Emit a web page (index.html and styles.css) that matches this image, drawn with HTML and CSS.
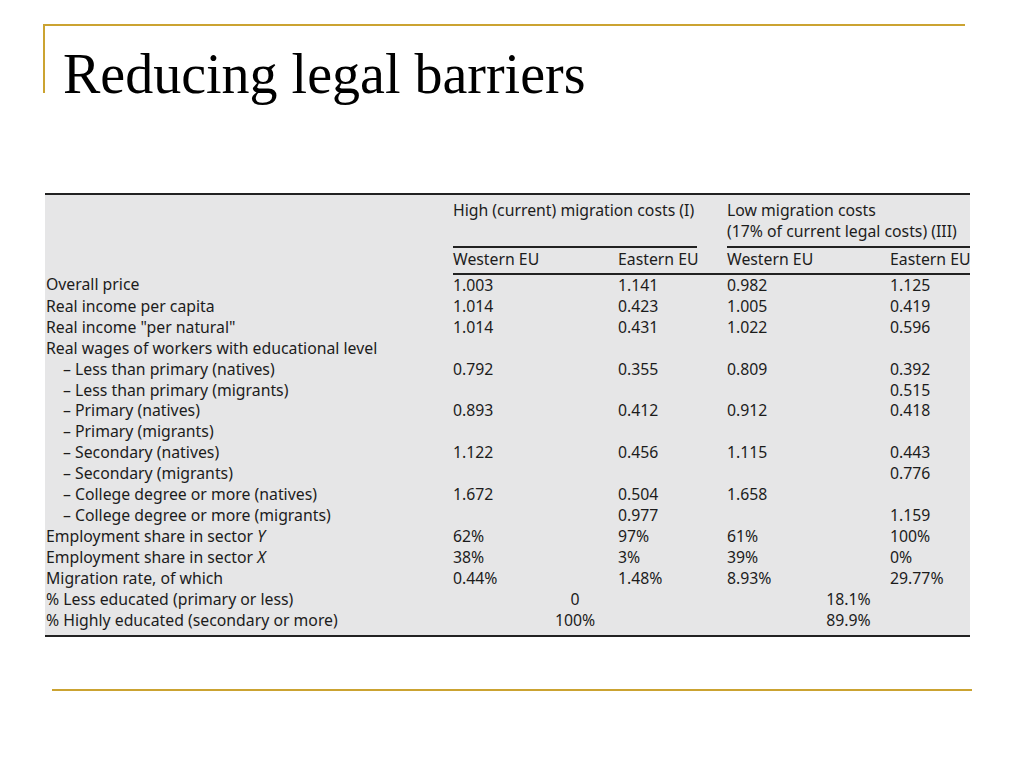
FILE: index.html
```html
<!DOCTYPE html>
<html lang="en">
<head>
<meta charset="utf-8">
<title>Reducing legal barriers</title>
<link rel="stylesheet" href="styles.css">
</head>
<body>
<div class="slide">
  <header class="title-bar">
    <h1>Reducing legal barriers</h1>
  </header>

  <div class="table-wrap">
    <table class="data">
      <colgroup>
        <col class="c-label"><col class="c-a"><col class="c-b"><col class="c-c"><col class="c-d">
      </colgroup>
      <thead>
        <tr class="group-row">
          <th rowspan="2" class="blank"></th>
          <th colspan="2" class="group g1"><div class="group-inner">High (current) migration costs (I)<br>&nbsp;</div></th>
          <th colspan="2" class="group g2"><div class="group-inner">Low migration costs<br>(17% of current legal costs) (III)</div></th>
        </tr>
        <tr class="sub-row">
          <th>Western EU</th>
          <th>Eastern EU</th>
          <th>Western EU</th>
          <th>Eastern EU</th>
        </tr>
      </thead>
      <tbody>
        <tr><td>Overall price</td><td>1.003</td><td>1.141</td><td>0.982</td><td>1.125</td></tr>
        <tr><td>Real income per capita</td><td>1.014</td><td>0.423</td><td>1.005</td><td>0.419</td></tr>
        <tr><td>Real income "per natural"</td><td>1.014</td><td>0.431</td><td>1.022</td><td>0.596</td></tr>
        <tr><td>Real wages of workers with educational level</td><td></td><td></td><td></td><td></td></tr>
        <tr><td class="ind">– Less than primary (natives)</td><td>0.792</td><td>0.355</td><td>0.809</td><td>0.392</td></tr>
        <tr><td class="ind">– Less than primary (migrants)</td><td></td><td></td><td></td><td>0.515</td></tr>
        <tr><td class="ind">– Primary (natives)</td><td>0.893</td><td>0.412</td><td>0.912</td><td>0.418</td></tr>
        <tr><td class="ind">– Primary (migrants)</td><td></td><td></td><td></td><td></td></tr>
        <tr><td class="ind">– Secondary (natives)</td><td>1.122</td><td>0.456</td><td>1.115</td><td>0.443</td></tr>
        <tr><td class="ind">– Secondary (migrants)</td><td></td><td></td><td></td><td>0.776</td></tr>
        <tr><td class="ind">– College degree or more (natives)</td><td>1.672</td><td>0.504</td><td>1.658</td><td></td></tr>
        <tr><td class="ind">– College degree or more (migrants)</td><td></td><td>0.977</td><td></td><td>1.159</td></tr>
        <tr><td>Employment share in sector <i>Y</i></td><td>62%</td><td>97%</td><td>61%</td><td>100%</td></tr>
        <tr><td>Employment share in sector <i>X</i></td><td>38%</td><td>3%</td><td>39%</td><td>0%</td></tr>
        <tr><td>Migration rate, of which</td><td>0.44%</td><td>1.48%</td><td>8.93%</td><td>29.77%</td></tr>
        <tr><td>% Less educated (primary or less)</td><td colspan="2" class="span1">0</td><td colspan="2" class="span2">18.1%</td></tr>
        <tr class="last"><td>% Highly educated (secondary or more)</td><td colspan="2" class="span1">100%</td><td colspan="2" class="span2">89.9%</td></tr>
      </tbody>
    </table>
  </div>

  <div class="footer-line"></div>
</div>
</body>
</html>
```

FILE: styles.css
```css
html, body {
  margin: 0;
  padding: 0;
  background: #ffffff;
}

.slide {
  width: 1024px;
  height: 768px;
  overflow: hidden;
  position: relative;
  background: #ffffff;
  padding-top: 24px;
  box-sizing: border-box;
}

.title-bar {
  margin-left: 43px;
  width: 920px;
  height: 67px;
  border-top: 2px solid #cba331;
  border-left: 2px solid #cba331;
  box-sizing: content-box;
}

.title-bar h1 {
  margin: 0;
  padding: 20px 0 0 18px;
  font-family: "Liberation Serif", "Times New Roman", serif;
  font-weight: normal;
  font-size: 56px;
  line-height: 56px;
  color: #000000;
  white-space: nowrap;
}

.table-wrap {
  margin-top: 100px;
  margin-left: 45px;
  width: 925px;
}

.data {
  width: 925px;
  table-layout: fixed;
  border-collapse: collapse;
  border-spacing: 0;
  background: #e6e6e7;
  border-top: 2px solid #222222;
  border-bottom: 2px solid #222222;
  font-family: "Noto Sans", "Open Sans", sans-serif;
  font-size: 15.8px;
  color: #1c1c1c;
}

.c-label { width: 408px; }
.c-a { width: 165px; }
.c-b { width: 109px; }
.c-c { width: 163px; }
.c-d { width: 80px; }

.data th {
  font-weight: normal;
  text-align: left;
  padding: 0;
  white-space: nowrap;
}

.group-row th {
  vertical-align: top;
  padding-top: 5px;
}

.group-inner {
  line-height: 21px;
  padding-bottom: 4px;
  border-bottom: 2px solid #222222;
}

.g1 .group-inner {
  margin-right: 30px;
}

.sub-row th {
  line-height: 20px;
  padding: 1px 0 4px 0;
  border-bottom: 2px solid #222222;
}

.data td {
  padding: 0;
  height: 20.9px;
  line-height: 20.9px;
  white-space: nowrap;
  vertical-align: top;
}

.data td:first-child {
  padding-left: 1px;
}

.data td.ind {
  padding-left: 18px;
}

.data td.span1 {
  text-align: center;
  padding-right: 30px;
}

.data td.span2 {
  text-align: center;
}

.data tr.last td {
  height: 25px;
}

.footer-line {
  position: absolute;
  left: 52px;
  top: 689px;
  width: 920px;
  height: 2px;
  background: #cba331;
}
```
